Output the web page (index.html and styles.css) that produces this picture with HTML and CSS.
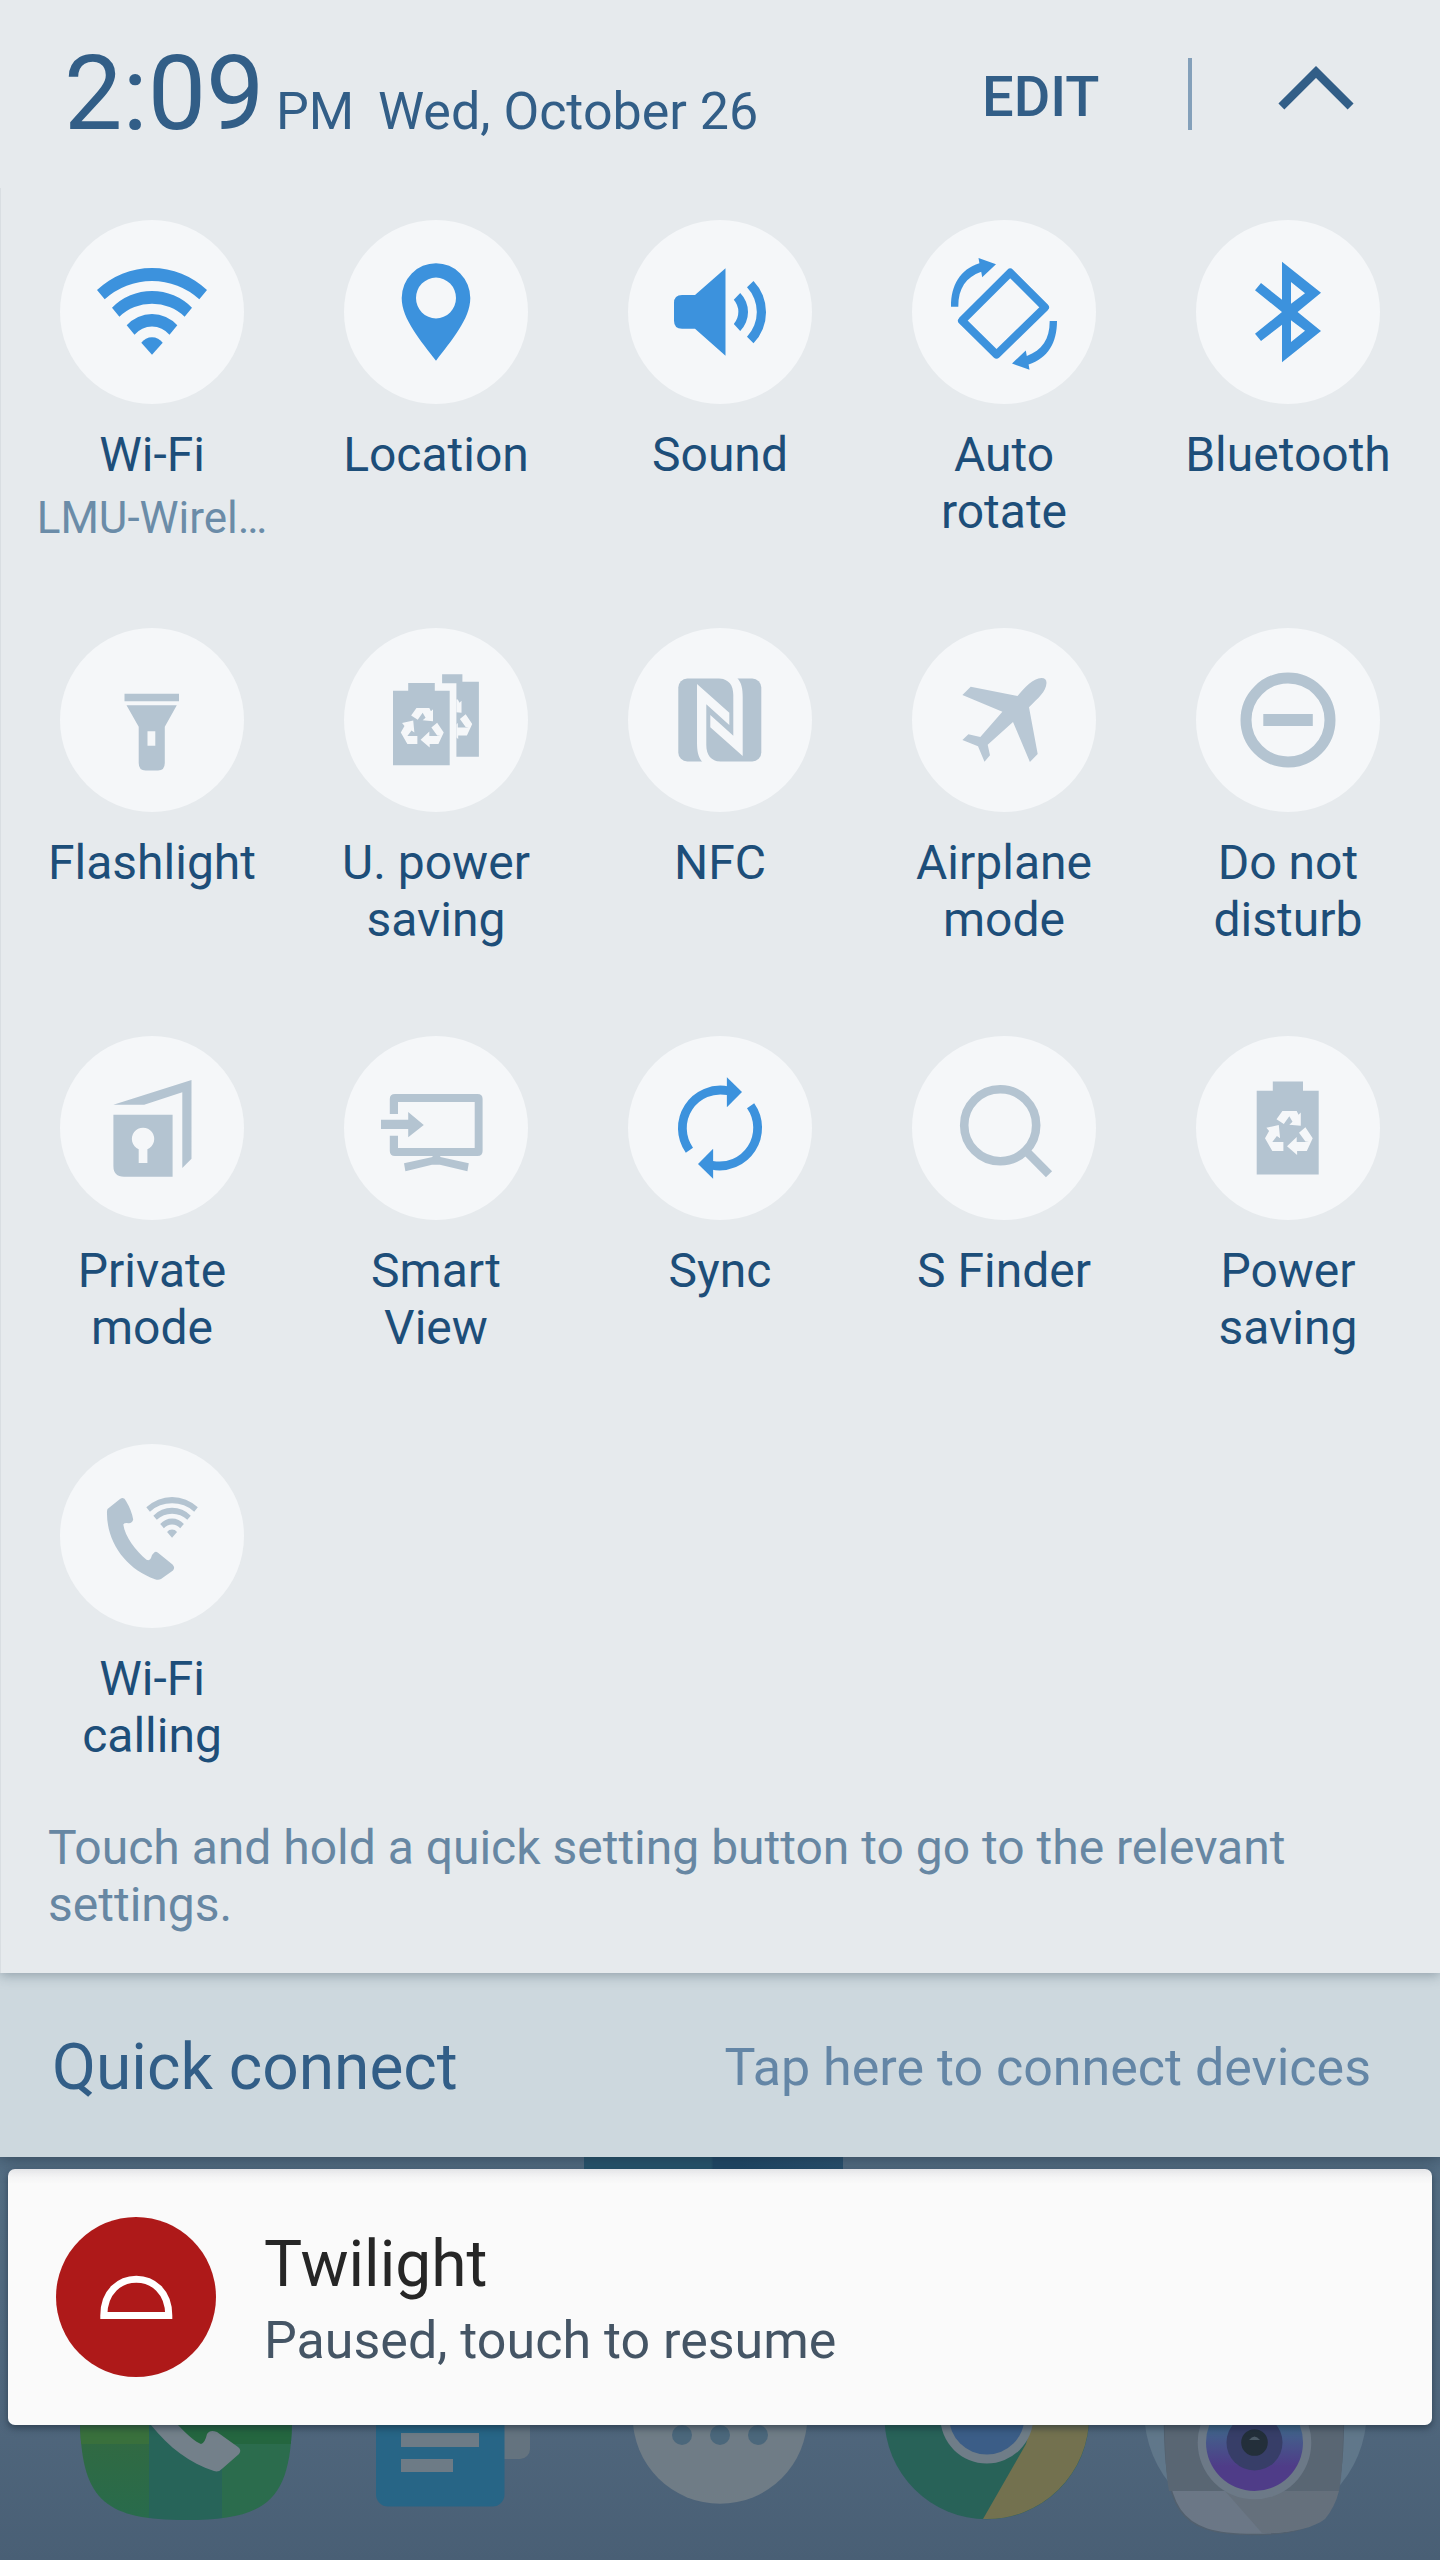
FILE: index.html
```html
<!DOCTYPE html>
<html lang="en">
<head>
<meta charset="utf-8">
<title>Quick settings</title>
<link rel="stylesheet" href="styles.css">
</head>
<body>
<svg class="defs" aria-hidden="true">
  <defs>
    <g id="wifi">
      <path d="M37 70A79.8 79.8 0 0 1 147 70L139.3 79.3A70.3 70.3 0 0 0 44.7 79.3Z"/>
      <path d="M52 87.7A56 56 0 0 1 132 87.7L124.6 96.7A47.4 47.4 0 0 0 59.4 96.7Z"/>
      <path d="M66.7 105.3A34 34 0 0 1 117.3 105.3L109.5 114.7A23 23 0 0 0 74.5 114.7Z"/>
      <path d="M81.3 122.7A13.4 13.4 0 0 1 102.7 122.7L92 134.7Z"/>
    </g>
    <g id="recycle">
      <path d="M86.4 75H100.7L102.5 78.7L104.8 76.5V89.7L93.3 88.7L96.5 85.7L93.3 80.3L87.8 88L80.5 83.3Z"/>
      <path d="M70.4 91.7L82.8 89L84.1 102.3L80.9 99.9L76.3 106H87.4V115H76.3L69 102.3L73.1 95Z"/>
      <path d="M109.4 91.3L116.7 102.3L110.8 115H101.1V119L91 110.3L100.7 101V106H113L109.4 105.5L103 96.7Z"/>
    </g>
    <clipPath id="back-cell"><path d="M112.4 53H136V130H112.4Z"/></clipPath>
    <linearGradient id="lens" x1="0" y1="0" x2="0" y2="1"><stop offset=".3" stop-color="#3f6a8c"/><stop offset=".75" stop-color="#4f3c88"/></linearGradient>
    <linearGradient id="phone-left" x1="0" y1="0" x2="0" y2="1"><stop offset="0" stop-color="#33693f"/><stop offset="1" stop-color="#286b4c"/></linearGradient>
    <clipPath id="phone-shape"><path d="M80 95C80 180 104 200 186 200C268 200 292 180 292 95Z"/></clipPath>
  </defs>
</svg>

<main class="screen">
  <section class="panel">
    <header class="header">
      <span class="time">2:09</span>
      <span class="period">PM</span>
      <span class="date">Wed, October 26</span>
      <span class="edit">EDIT</span>
      <span class="divider"></span>
      <svg class="chevron" viewBox="0 0 76 46"><path d="M3.4 41.5L38 7L72.6 41.5" fill="none" stroke="currentColor" stroke-width="8.4"/></svg>
    </header>

    <div class="tiles">
      <div class="tile on">
        <svg class="icon" viewBox="0 0 184 184"><use href="#wifi"/></svg>
        <div class="label">Wi-Fi</div><div class="sub">LMU-Wirel…</div>
      </div>
      <div class="tile on">
        <svg class="icon" viewBox="0 0 184 184"><path fill-rule="evenodd" d="M57.7 78A34.3 34.8 0 0 1 126.3 78C126.3 99 107 121 92 140.7C77 121 57.7 99 57.7 78ZM72 78a20 20.4 0 1 0 40 0a20 20.4 0 1 0 -40 0Z"/></svg>
        <div class="label">Location</div>
      </div>
      <div class="tile on">
        <svg class="icon" viewBox="0 0 184 184"><path d="M54 75H67L97.5 48.3V135.7L67 108.7H54Q46 108.7 46 100.7V83Q46 75 54 75Z"/><path d="M105.8 79.7L112.2 73A27 27 0 0 1 112.2 111L105.8 104A18.5 18.5 0 0 0 105.8 79.7ZM119 67.3L125.5 61A45 45 0 0 1 125.5 123.3L119 116.7A36 36 0 0 0 119 67.3Z"/></svg>
        <div class="label">Sound</div>
      </div>
      <div class="tile on">
        <svg class="icon" viewBox="0 0 184 184"><path class="line" stroke-width="8" stroke-linejoin="round" d="M98.2 52.6L133 87.3L84.5 134.6L50 100.7Z"/><g id="turn"><path d="M39 86.7C39 65 48 49.5 67.4 43.3L66.5 38L84 44.3L70.2 57.3L69.2 51.8C54 57.5 46.3 68 46.3 86.7Z"/></g><use href="#turn" transform="rotate(180 92 93.9)"/></svg>
        <div class="label">Auto<br>rotate</div>
      </div>
      <div class="tile on">
        <svg class="icon" viewBox="0 0 184 184"><path fill-rule="evenodd" d="M86 41.7L125 72.7L101.6 92L125 111L86 142.3V104.7L65 121L59 113.7L86 92L59 70.3L65 63L86 79.7ZM95 62V83.7L109 73.3ZM95 100.3V122L109 110.7Z"/></svg>
        <div class="label">Bluetooth</div>
      </div>

      <div class="tile">
        <svg class="icon" viewBox="0 0 184 184"><path fill-rule="evenodd" d="M64.5 65.7H119V73.3H64.5ZM66.5 77.3H116.8L104.8 98.7V135Q104.8 142.5 98 142.5H85.5Q78.7 142.5 78.7 135V98.7ZM87.5 103.3V117.7H95.3V103.3Z"/></svg>
        <div class="label">Flashlight</div>
      </div>
      <div class="tile">
        <svg class="icon" viewBox="0 0 184 184"><path d="M98.1 46.3H118.4V53.7H134.9V128.7H112.4V55.3H98.1ZM49 62.7H64.2V55H90.8V62.7H105.7V137.3H49Z"/><use class="cut" href="#recycle" transform="translate(-5.3 12.5) scale(.9)"/><g clip-path="url(#back-cell)"><use class="cut" href="#recycle" transform="translate(23.2 4) scale(.9)"/></g></svg>
        <div class="label">U. power<br>saving</div>
      </div>
      <div class="tile">
        <svg class="icon" viewBox="0 0 184 184"><rect x="50.3" y="50.5" width="83" height="83" rx="9"/><path class="cut" d="M69 56L101.3 84.7V97L78.3 76.3V117C78.3 127 83 133 92.7 134H74.3C70 129 69 123 69 114ZM114.7 128L82.3 99.3V87L105.3 107.7V67C105.3 57 101 51.5 91 50H109.3C113.7 55 114.7 61 114.7 69.3Z"/></svg>
        <div class="label">NFC</div>
      </div>
      <div class="tile">
        <svg class="icon soft" viewBox="0 0 184 184"><path d="M105.5 68C113 59 121 50.5 129.5 50Q134.5 50 134.5 55C134 64 126 70 117 79.3L125.7 126L117.9 134L101 94L75.7 116.7L78 127.3L72.5 133.7L66 118.3L50.4 112L56.4 106.3L68.3 109L90.4 83.7L50.4 67L58.7 58.7Z"/></svg>
        <div class="label">Airplane<br>mode</div>
      </div>
      <div class="tile">
        <svg class="icon" viewBox="0 0 184 184"><circle class="line" cx="92" cy="92" r="42" stroke-width="11"/><path d="M67.3 86H116.8V98H67.3Z"/></svg>
        <div class="label">Do not<br>disturb</div>
      </div>

      <div class="tile">
        <svg class="icon" viewBox="0 0 184 184"><path fill-rule="evenodd" d="M53.4 68.7L131.5 44V122.7L122.3 132V56.3L84.2 68.7ZM53.4 78.7H112.6V140.7H64Q53.4 140.7 53.4 130ZM78.7 113.2V127H87.4V113.2A11.2 11.2 0 1 0 78.7 113.2Z"/></svg>
        <div class="label">Private<br>mode</div>
      </div>
      <div class="tile">
        <svg class="icon" viewBox="0 0 184 184"><path d="M45.8 78V63Q45.8 58 51 58H133.5Q138.6 58 138.6 63V115Q138.6 120 133.5 120H96.3V121L124.8 127.3L123.4 135.3L95.9 128.7H88L61.4 135.3L60 127.3L88.5 121V120H51Q45.8 120 45.8 115V99.7H54V112H130.7V66H54V78ZM37 83.7H64.2V76L79.8 89L64.2 101.3V93H37Z"/></svg>
        <div class="label">Smart<br>View</div>
      </div>
      <div class="tile on">
        <svg class="icon" viewBox="0 0 184 184"><g id="half"><path class="line" stroke-width="8.8" d="M61.4 114.2A38.1 38.1 0 0 1 100 54.8"/><path d="M98.9 41.3L114 56L98.9 71.3Z"/></g><use href="#half" transform="rotate(180 92 92)"/></svg>
        <div class="label">Sync</div>
      </div>
      <div class="tile">
        <svg class="icon" viewBox="0 0 184 184"><circle class="line" cx="88.2" cy="89.2" r="36" stroke-width="8.6"/><path class="line" stroke-width="8.6" d="M113 114L137 138.3"/></svg>
        <div class="label">S Finder</div>
      </div>
      <div class="tile">
        <svg class="icon" viewBox="0 0 184 184"><path d="M60.7 54.7H76.8V45.5H107V54.7H122.7V138.5H60.7Z"/><use class="cut" href="#recycle"/></svg>
        <div class="label">Power<br>saving</div>
      </div>

      <div class="tile">
        <svg class="icon" viewBox="0 0 184 184"><path d="M47.5 65L60 55Q64 52.5 66 57Q71.5 66 73.2 75.5Q72 79.5 68.5 79.2Q64.5 78.5 63.3 80.5C65 93 76 107 86.5 115.8Q90 117 91 114Q92 110 94.5 108.2Q96 107.3 98 108.8L112.5 120.5Q115.5 123.5 113 126.5L101 135Q98.5 136.5 95 135.2C66 125 46 98 47 67Z"/><use href="#wifi" transform="translate(69 30.6) scale(.468)"/></svg>
        <div class="label">Wi-Fi<br>calling</div>
      </div>
    </div>

    <p class="hint">Touch and hold a quick setting button to go to the relevant settings.</p>
  </section>

  <section class="connect">
    <span class="connect-title">Quick connect</span>
    <span class="connect-hint">Tap here to connect devices</span>
  </section>

  <section class="home">
    <div class="widget-edge"></div>
    <article class="card">
      <svg class="badge" viewBox="0 0 160 160"><circle cx="80" cy="80" r="80" fill="#ae1919"/><path d="M47.8 98.5C47.8 50 112.8 50 112.8 98.5Z" fill="none" stroke="#fff" stroke-width="7"/></svg>
      <div class="card-text">
        <div class="card-title">Twilight</div>
        <div class="card-sub">Paused, touch to resume</div>
      </div>
    </article>
    <!-- dock icons, cut off by the bottom edge of the card -->
    <svg class="dock" viewBox="0 105 1440 135">
      <g clip-path="url(#phone-shape)">
        <path d="M80 95H149V200H80Z" fill="url(#phone-left)"/><path d="M80 95H149V124H80Z" fill="#39703c"/>
        <path d="M149 95H222V200H149Z" fill="#276459"/><path d="M222 95H293V200H222Z" fill="#2b6c4d"/>
        <path d="M155 95H293V124H185Z" fill="#24663f"/>
      </g>
      <path d="M140 90C160 120 185 142 214 151Q219 152.500 223 148L239 134Q242 130 238 127L217 112Q210 109 207 114Q205 123 201 124Q193 121 178 105L165 90Z" fill="#73808a"/>
      <rect x="470" y="60" width="60" height="79" rx="10" fill="#64737f"/>
      <rect x="376" y="60" width="128.500" height="126.500" rx="12" fill="#276586"/>
      <path d="M401 113H479V127H401ZM401 139H453V152H401Z" fill="#6d7b86"/>
      <circle cx="720" cy="96.500" r="87.300" fill="#6f7c86"/>
      <g fill="#4b677b"><circle cx="682" cy="115" r="10"/><circle cx="720" cy="115" r="10"/><circle cx="758" cy="115" r="10"/></g>
      <circle cx="986.800" cy="97" r="102.300" fill="#286258"/>
      <path d="M983 199L1026 124L1034 95H1089A102.300 102.300 0 0 1 983 199Z" fill="#73714f"/>
      <circle cx="986.800" cy="97" r="46.500" fill="#6f7d88"/><circle cx="986.800" cy="97" r="37.600" fill="#3b5d87"/>
      <circle cx="1255.500" cy="93" r="111" fill="#60778a"/>
      <path d="M1164.400 90C1164.400 190 1176 214.500 1254 214.500C1332 214.500 1343.500 190 1343.500 90Z" fill="#6b7786" stroke="#52606e" stroke-width="1.500"/>
      <path d="M1165 90C1165 125 1165 150 1169 171H1339C1343 150 1343 125 1343 90Z" fill="#596673"/>
      <path d="M1225 171L1262 213C1290 213 1312 209 1325 199Q1335 187 1339 171Z" fill="#65707c"/>
      <circle cx="1254.500" cy="122.500" r="56.800" fill="#6c7987"/>
      <circle cx="1254.500" cy="122.500" r="48.500" fill="url(#lens)"/>
      <circle cx="1254.500" cy="122.500" r="28" fill="#373e68"/><circle cx="1254.500" cy="122.500" r="13.300" fill="#232f3a"/>
      <path d="M1249 120Q1254.500 113 1260 120Z" fill="#4b5a66"/>
    </svg>
  </section>
</main>
</body>
</html>
```

FILE: styles.css
```css
body {
  margin: 0;
  font-family: Roboto, "Noto Sans", sans-serif;
}

.defs {
  display: block;
  width: 0;
  height: 0;
}

.screen {
  display: flex;
  flex-direction: column;
  width: 1440px;
  height: 2560px;
  overflow: hidden;
  background: #4d667c;
}

.panel {
  position: relative;
  z-index: 2;
  box-sizing: border-box;
  height: 1973px;
  background: #e6eaed;
  box-shadow: 0 2px 12px rgba(40, 60, 75, .38);
}

.header {
  display: flex;
  align-items: baseline;
  box-sizing: border-box;
  height: 188px;
  padding: 32px 0 0 64px;
  color: #325e87;
  white-space: nowrap;
}

.time {
  width: 212px;
  font-size: 104px;
  line-height: 123px;
}

.period {
  width: 102px;
  font-size: 52px;
}

.date {
  width: 604px;
  font-size: 52px;
}

.edit {
  align-self: flex-start;
  width: 206px;
  margin-top: 32px;
  font-size: 56px;
  font-weight: 500;
  line-height: 66px;
}

.divider {
  align-self: flex-start;
  width: 4px;
  height: 72px;
  margin-top: 26px;
  background: #84a0ba;
}

.chevron {
  align-self: flex-start;
  width: 76px;
  height: 46px;
  margin: 33px 0 0 86px;
}

.tiles {
  display: grid;
  grid-template-columns: repeat(5, 284px);
  grid-template-rows: 408px 408px 408px 375px;
  padding: 32px 0 0 9px;
  border-left: 1px solid #d9dee2;
}

.tile {
  display: flex;
  flex-direction: column;
  align-items: center;
  color: #1d4e79;
  text-align: center;
  white-space: nowrap;
}

.icon {
  flex: none;
  width: 184px;
  height: 184px;
  border-radius: 50%;
  background: #f5f7f9;
  color: #b4c4d1;
  fill: currentColor;
}

.on .icon {
  color: #3c92dd;
}

.icon.soft {
  color: #b9c8d5;
}

.line {
  fill: none;
  stroke: currentColor;
}

.cut {
  fill: #f5f7f9;
}

.label {
  margin-top: 22px;
  font-size: 48px;
  line-height: 57px;
}

.sub {
  margin-top: 9px;
  color: #6b8ca8;
  font-size: 44px;
  line-height: 52px;
}

.hint {
  margin: 0;
  padding: 0 47px;
  height: 154px;
  border-left: 1px solid #d9dee2;
  color: #6787a3;
  font-size: 48px;
  line-height: 57px;
}

.connect {
  position: relative;
  z-index: 1;
  display: flex;
  align-items: center;
  justify-content: space-between;
  box-sizing: border-box;
  height: 184px;
  padding: 4px 69px 0 52px;
  background: #cdd8de;
  box-shadow: 0 2px 16px rgba(20, 35, 50, .5);
}

.connect-title {
  color: #325e87;
  font-size: 64px;
}

.connect-hint {
  color: #6486a6;
  font-size: 52px;
}

.home {
  position: relative;
  flex: 1;
  padding-top: 12px;
  background: linear-gradient(#546e84, #50677d 60%, #495f75);
}

.widget-edge {
  position: absolute;
  top: 0;
  left: 584px;
  width: 259px;
  height: 12px;
  background: linear-gradient(90deg, #29566f 0 49%, #214968 50% 60%, #2a5270);
}

.card {
  position: relative;
  display: flex;
  align-items: center;
  box-sizing: border-box;
  height: 256px;
  margin: 0 8px;
  padding-left: 48px;
  border-radius: 7px;
  background: linear-gradient(#efeff1, #fafafa 14px);
  box-shadow: 0 3px 7px rgba(20, 35, 50, .55);
}

.badge {
  width: 160px;
  height: 160px;
}

.card-text {
  margin: 6px 0 0 48px;
}

.card-title {
  color: #262626;
  font-size: 64px;
  line-height: 74px;
}

.card-sub {
  margin-top: 8px;
  color: #455565;
  font-size: 52px;
  line-height: 62px;
}

.dock {
  display: block;
  width: 1440px;
  height: 135px;
}
```
